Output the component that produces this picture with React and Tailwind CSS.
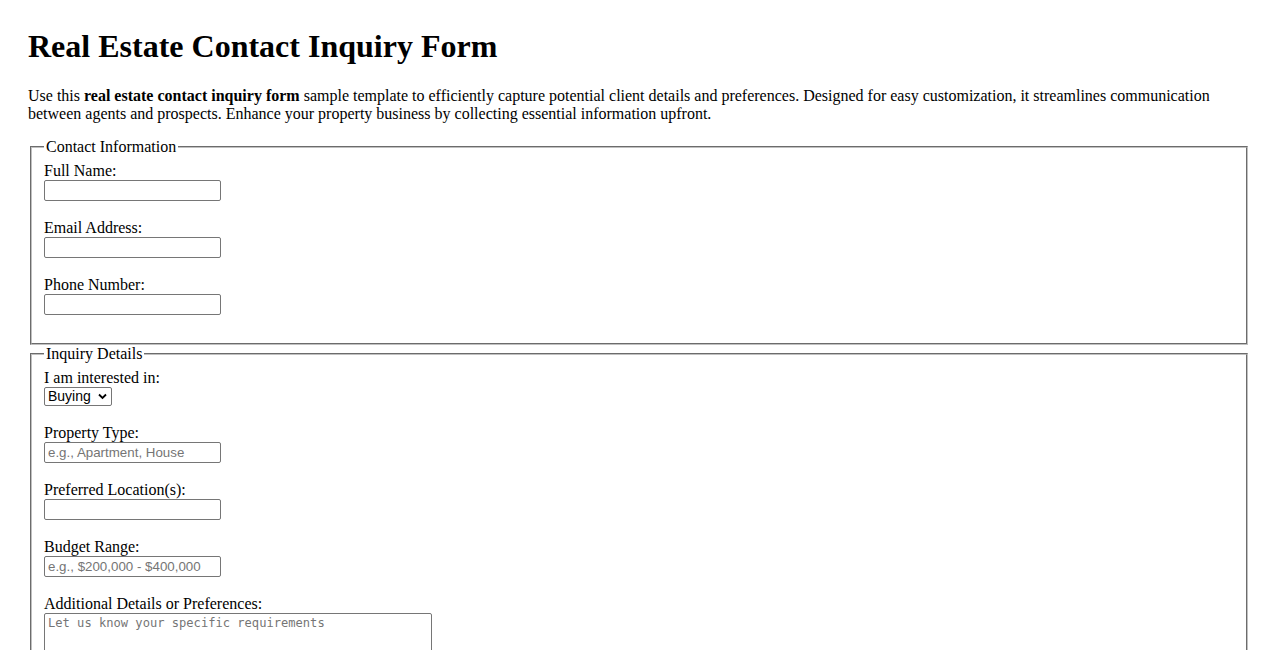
const inputCls =
  "block w-[177px] h-[21px] border border-[#767676] rounded-[2px] px-[3px] bg-white text-[13.33px] text-black placeholder:text-[#757575] font-['Liberation_Sans',Arial,sans-serif]";

function Field({ label, children }) {
  return (
    <div className="mb-[18px]">
      <label className="block h-[18px]">{label}</label>
      {children}
    </div>
  );
}

function Group({ legend, children }) {
  return (
    <fieldset className="mx-[2px] px-3 pt-[5.6px] pb-[10px] border-2 [border-style:groove] border-[#c0c0c0] min-w-0">
      <legend className="px-[2px]">{legend}</legend>
      {children}
    </fieldset>
  );
}

export default function App() {
  return (
    <div className="min-h-screen bg-white text-black px-[28px] pt-[28px] text-[16px] leading-[normal] font-['Liberation_Serif','Times_New_Roman',serif]">
      <h1 className="text-[32px] font-bold mb-[22.44px]">Real Estate Contact Inquiry Form</h1>
      <p className="mb-[15px]">
        Use this <strong>real estate contact inquiry form</strong> sample template to efficiently capture
        potential client details and preferences. Designed for easy customization, it streamlines
        communication between agents and prospects. Enhance your property business by collecting
        essential information upfront.
      </p>

      <form>
        <Group legend="Contact Information">
          <Field label="Full Name:">
            <input type="text" className={inputCls} />
          </Field>
          <Field label="Email Address:">
            <input type="email" className={inputCls} />
          </Field>
          <Field label="Phone Number:">
            <input type="tel" className={inputCls} />
          </Field>
        </Group>

        <Group legend="Inquiry Details">
          <Field label="I am interested in:">
            <div className="relative w-[68px] h-[19px]">
              <select className="appearance-none block w-[68px] h-[19px] border border-[#767676] rounded-[2px] pl-[3px] pr-[18px] bg-white text-[14px] font-['Liberation_Sans',Arial,sans-serif]">
                <option>Buying</option>
                <option>Selling</option>
                <option>Renting</option>
              </select>
              <svg
                className="absolute right-[5px] top-[6px] pointer-events-none"
                width="9"
                height="7"
                viewBox="0 0 9 7"
              >
                <path d="M1 1.5 L4.5 5 L8 1.5" fill="none" stroke="#000" strokeWidth="1.8" />
              </svg>
            </div>
          </Field>
          <Field label="Property Type:">
            <input type="text" placeholder="e.g., Apartment, House" className={inputCls} />
          </Field>
          <Field label="Preferred Location(s):">
            <input type="text" className={inputCls} />
          </Field>
          <Field label="Budget Range:">
            <input type="text" placeholder="e.g., $200,000 - $400,000" className={inputCls} />
          </Field>
          <Field label="Additional Details or Preferences:">
            <textarea
              rows={4}
              placeholder="Let us know your specific requirements"
              className="block w-[388px] h-[80px] border border-[#767676] rounded-[2px] px-[3px] py-[2px] bg-white text-[12.1px] placeholder:text-[#757575] font-['DejaVu_Sans_Mono',monospace] resize"
            />
          </Field>
        </Group>
      </form>
    </div>
  );
}
